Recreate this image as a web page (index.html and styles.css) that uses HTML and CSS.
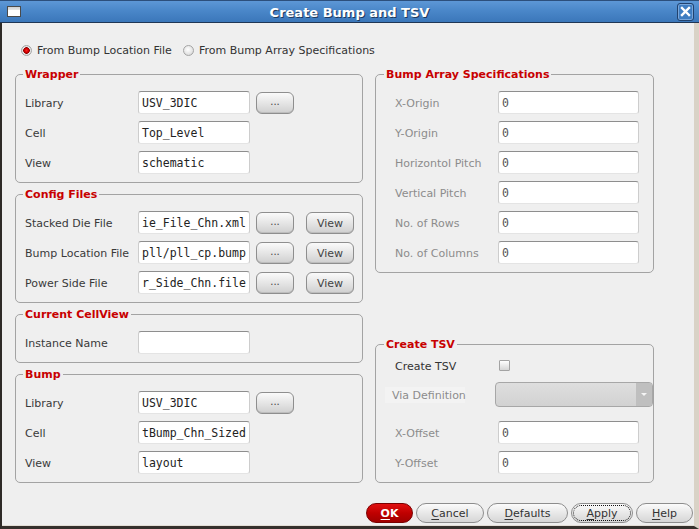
FILE: index.html
```html
<!DOCTYPE html>
<html>
<head>
<meta charset="utf-8">
<title>Create Bump and TSV</title>
<link rel="stylesheet" href="styles.css">
</head>
<body>
<div class="window">
  <div class="titlebar">
    <span class="win-icon"></span>
    <span class="title">Create Bump and TSV</span>
    <span class="close">
      <svg width="11" height="11" viewBox="0 0 11 11"><path d="M2 2 L9 9 M9 2 L2 9" stroke="#fff" stroke-width="2.4" stroke-linecap="square"/></svg>
    </span>
  </div>
  <div class="content">
    <div class="mode-row">
      <span class="radio checked"></span><span class="radio-text">From Bump Location File</span>
      <span class="radio"></span><span class="radio-text">From Bump Array Specifications</span>
    </div>
    <div class="columns">
      <div class="col col-left">
        <fieldset class="group">
          <legend>Wrapper</legend>
          <div class="row"><span class="lbl">Library</span><span class="field">USV_3DIC</span><span class="btn dots">...</span></div>
          <div class="row"><span class="lbl">Cell</span><span class="field">Top_Level</span></div>
          <div class="row"><span class="lbl">View</span><span class="field">schematic</span></div>
        </fieldset>
        <fieldset class="group">
          <legend>Config Files</legend>
          <div class="row"><span class="lbl">Stacked Die File</span><span class="field">ie_File_Chn.xml</span><span class="btn dots">...</span><span class="btn view">View</span></div>
          <div class="row"><span class="lbl">Bump Location File</span><span class="field">pll/pll_cp.bump</span><span class="btn dots">...</span><span class="btn view">View</span></div>
          <div class="row"><span class="lbl">Power Side File</span><span class="field">r_Side_Chn.file</span><span class="btn dots">...</span><span class="btn view">View</span></div>
        </fieldset>
        <fieldset class="group">
          <legend>Current CellView</legend>
          <div class="row"><span class="lbl">Instance Name</span><span class="field"></span></div>
        </fieldset>
        <fieldset class="group">
          <legend>Bump</legend>
          <div class="row"><span class="lbl">Library</span><span class="field">USV_3DIC</span><span class="btn dots">...</span></div>
          <div class="row"><span class="lbl">Cell</span><span class="field">tBump_Chn_Sized</span></div>
          <div class="row"><span class="lbl">View</span><span class="field">layout</span></div>
        </fieldset>
      </div>
      <div class="col col-right">
        <fieldset class="group group-r">
          <legend>Bump Array Specifications</legend>
          <div class="row"><span class="lbl dis">X-Origin</span><span class="field num">0</span></div>
          <div class="row"><span class="lbl dis">Y-Origin</span><span class="field num">0</span></div>
          <div class="row"><span class="lbl dis">Horizontol Pitch</span><span class="field num">0</span></div>
          <div class="row"><span class="lbl dis">Vertical Pitch</span><span class="field num">0</span></div>
          <div class="row"><span class="lbl dis">No. of Rows</span><span class="field num">0</span></div>
          <div class="row"><span class="lbl dis">No. of Columns</span><span class="field num">0</span></div>
        </fieldset>
        <fieldset class="group group-r group-tsv">
          <legend>Create TSV</legend>
          <div class="row row-check"><span class="lbl lbl-check">Create TSV</span><span class="checkbox"></span></div>
          <div class="row row-via"><span class="via-lbl">Via Definition</span><span class="combo"><span class="combo-arrow"></span></span></div>
          <div class="row row-off"><span class="lbl dis">X-Offset</span><span class="field num">0</span></div>
          <div class="row"><span class="lbl dis">Y-Offset</span><span class="field num">0</span></div>
        </fieldset>
      </div>
    </div>
    <div class="footer">
      <span class="pbtn ok"><u>O</u>K</span>
      <span class="pbtn cancel"><u>C</u>ancel</span>
      <span class="pbtn defaults"><u>D</u>efaults</span>
      <span class="pbtn apply"><u>A</u>pply</span>
      <span class="pbtn help"><u>H</u>elp</span>
    </div>
  </div>
</div>
</body>
</html>
```
FILE: styles.css
```css
* { box-sizing: border-box; }
html, body { margin: 0; padding: 0; background: #efefef; }
body {
  font-family: "DejaVu Sans", "Liberation Sans", sans-serif;
  font-size: 11px;
  color: #3a3a3a;
}
.window {
  width: 699px;
  height: 529px;
  display: flex;
  flex-direction: column;
  overflow: hidden;
}
.titlebar {
  height: 23px;
  flex: none;
  display: grid;
  grid-template-columns: 40px 1fr 40px;
  align-items: center;
  background: linear-gradient(#5d97d6 0%, #4a87c9 45%, #3b77ba 100%);
  border-top: 1px solid #2c4f7c;
  border-bottom: 1px solid #1f3655;
}
.win-icon {
  justify-self: start;
  margin-left: 7px;
  width: 14px;
  height: 11px;
  border: 1px solid #4a4a4a;
  background: linear-gradient(#cfcfcf 0, #e6e6e6 3px, #ffffff 3px);
}
.title {
  text-align: center;
  color: #fff;
  font-weight: bold;
  font-size: 13px;
  padding-top: 2px;
  text-shadow: 1px 1px 0 #1e3a5e;
}
.close {
  justify-self: end;
  margin-right: 5px;
  width: 17px;
  height: 18px;
  border: 1px solid #21426e;
  border-radius: 3px;
  box-shadow: inset 0 0 0 1px #79a6da;
  background: #3f7dc1;
  display: flex;
  align-items: center;
  justify-content: center;
}
.close svg { display: block; }
.content {
  flex: 1;
  display: flex;
  flex-direction: column;
  border-left: 2px solid #2e2a27;
  border-right: 5px solid #d9d2c6;
  border-bottom: 3px solid #35302c;
  box-shadow: inset 0 -1px 0 #e2ddd5;
  padding: 20px 1px 3px 13px;
}
.mode-row {
  height: 14px;
  display: flex;
  align-items: center;
  margin-bottom: 11px;
  padding-left: 6px;
}
.radio {
  width: 11px;
  height: 11px;
  border-radius: 50%;
  border: 1px solid #a5a5a5;
  background: radial-gradient(circle at 45% 40%, #ffffff 0, #e4e4e4 60%, #c9c9c9 100%);
  flex: none;
}
.radio.checked {
  background: radial-gradient(circle at 50% 50%, #ff2020 0, #d00000 2px, #8c0000 3px, #e8e8e8 3.6px, #d0d0d0 100%);
}
.radio-text { margin-left: 5px; margin-right: 11px; color: #333; padding-top: 1px; }
.mode-row .radio:nth-of-type(2) + .radio-text { margin-left: 6px; }

.columns {
  display: flex;
  gap: 12px;
  height: 415px;
}
.col { display: flex; flex-direction: column; }
.col-left { width: 348px; gap: 5px; }
.col-right { width: 279px; justify-content: space-between; }

.group {
  margin: 0;
  min-width: 0;
  border: 1px solid #a3a3a3;
  border-radius: 5px;
  padding: 10px 0 8px 0;
}
.group legend {
  margin-left: 7px;
  padding: 0 2px;
  height: 13px;
  line-height: 14px;
  font-weight: bold;
  font-size: 11px;
  color: #c80000;
}
.group-r legend { margin-left: 8px; }

.row {
  display: flex;
  align-items: center;
  height: 23px;
  padding-left: 9px;
}
.row + .row { margin-top: 7px; }
.lbl { width: 113px; flex: none; color: #3a3a3a; white-space: nowrap; padding-top: 2px; }
.group-r .row { padding-left: 19px; }
.group-r .lbl { width: 103px; }
.lbl.dis { color: #8c8c8c; }

.field {
  width: 112px;
  height: 23px;
  flex: none;
  background: #fff;
  border: 1px solid #cdcdcd;
  border-top-color: #8e8e8e;
  border-bottom-color: #e4e4e4;
  border-radius: 3px;
  padding: 2px 0 0 3px;
  font-family: "DejaVu Sans Mono", "Liberation Mono", monospace;
  font-size: 11.5px;
  line-height: 19px;
  color: #222;
  white-space: nowrap;
  overflow: hidden;
}
.group-r .field { width: 141px; }
.field.num { color: #555; }

.btn {
  height: 22px;
  flex: none;
  border: 1px solid #8e8e8e;
  border-radius: 6px;
  background: linear-gradient(#fafafa, #e3e3e3 55%, #cfcfcf);
  box-shadow: inset 0 -1px 0 #bdbdbd;
  display: flex;
  align-items: center;
  justify-content: center;
  color: #444;
  font-size: 11px;
}
.btn.dots { width: 38px; margin-left: 6px; padding-bottom: 3px; font-size: 10px; }
.btn.view { width: 48px; margin-left: 12px; padding-top: 1px; }

.group-tsv { padding-top: 6px; }
.row.row-check { height: 16px; }
.group-r .lbl-check { width: 104px; color: #333; }
.checkbox {
  width: 11px;
  height: 11px;
  border: 1px solid #a3a3a3;
  border-radius: 1px;
  background: linear-gradient(#ffffff, #d6d6d6);
}
.group-r .row.row-via {
  margin-top: 9px;
  height: 25px;
  padding-left: 9px;
}
.via-lbl {
  width: 80px;
  height: 16px;
  line-height: 17px;
  padding-left: 7px;
  background: #f3f3f3;
  color: #8c8c8c;
  white-space: nowrap;
  flex: none;
}
.combo {
  margin-left: 30px;
  width: 158px;
  height: 25px;
  flex: none;
  border: 1px solid #a7a7a7;
  border-radius: 4px;
  background: linear-gradient(#dedede, #d2d2d2);
  display: flex;
  justify-content: flex-end;
  overflow: hidden;
}
.combo-arrow {
  width: 16px;
  height: 100%;
  background: #bfbfbf;
  position: relative;
}
.combo-arrow::after {
  content: "";
  position: absolute;
  left: 5px;
  top: 10px;
  border-left: 3px solid transparent;
  border-right: 3px solid transparent;
  border-top: 3px solid #f5f5f5;
}
.row.row-off { margin-top: 14px; }

.footer {
  margin-top: 20px;
  height: 20px;
  display: flex;
  justify-content: flex-end;
  gap: 3px;
}
.pbtn {
  height: 20px;
  border: 1px solid #8d8d8d;
  border-radius: 10px;
  background: linear-gradient(#fbfbfb, #e8e8e8 50%, #d6d6d6);
  display: flex;
  align-items: center;
  justify-content: center;
  color: #333;
  font-size: 11px;
  padding-top: 1px;
}
.pbtn u { text-underline-offset: 2px; }
.pbtn.ok {
  width: 47px;
  background: linear-gradient(#e01010, #c00000 50%, #a00000);
  border-color: #7a0000;
  color: #fff;
  font-weight: bold;
}
.pbtn.cancel { width: 68px; }
.pbtn.defaults { width: 81px; }
.pbtn.apply { width: 62px; outline: 1px dotted #111; outline-offset: -3px; }
.pbtn.help { width: 57px; }
```
